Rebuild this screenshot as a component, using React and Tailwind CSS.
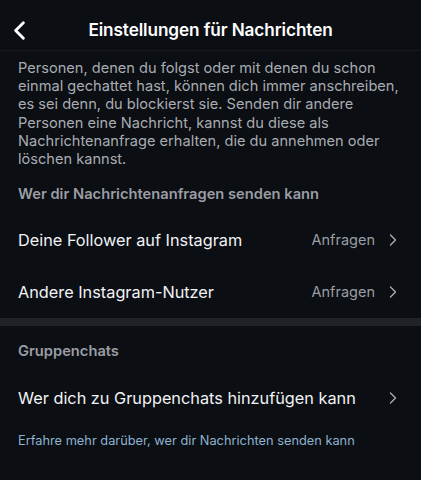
import { ChevronLeft, ChevronRight } from "lucide-react";

const requestRows = [
  ["Deine Follower auf Instagram", "Anfragen"],
  ["Andere Instagram-Nutzer", "Anfragen"],
];

export default function App() {
  return (
    <div
      className="h-[480px] w-[421px] overflow-hidden bg-[#0b0e13] text-white"
      style={{ fontFamily: "Inter, 'Noto Sans', sans-serif" }}
    >
      <header className="relative flex h-[51px] items-center justify-center border-b border-[#161a20] pt-[9px]">
        <ChevronLeft
          className="absolute left-[4px] top-[15px] h-[31px] w-[31px] text-white"
          strokeWidth={2.2}
        />
        <h1 className="text-[17.2px] font-semibold tracking-[-0.1px]">
          Einstellungen für Nachrichten
        </h1>
      </header>

      <p className="px-[18px] pt-[8px] text-[14.6px] leading-[18.2px] text-[#a9acb2]">
        Personen, denen du folgst oder mit denen du schon einmal gechattet
        hast, können dich immer anschreiben, es sei denn, du blockierst sie.
        Senden dir andere Personen eine Nachricht, kannst du diese als
        Nachrichtenanfrage erhalten, die du annehmen oder löschen kannst.
      </p>

      <h2 className="px-[18px] pt-[15px] text-[14.7px] font-semibold text-[#9a9da3]">
        Wer dir Nachrichtenanfragen senden kann
      </h2>

      <div className="pt-[9px]">
        {requestRows.map(([label, value]) => (
          <div
            key={label}
            className="flex h-[52px] items-center justify-between px-[18px]"
          >
            <span className="text-[16.3px] text-[#f2f3f5]">{label}</span>
            <span className="flex items-center gap-[8px]">
              <span className="text-[14.5px] text-[#9a9da3]">{value}</span>
              <ChevronRight className="h-[20px] w-[20px] text-[#a9acb2]" strokeWidth={1.6} />
            </span>
          </div>
        ))}
      </div>

      <div className="h-[8px] bg-[#1f2226]" />

      <h2 className="px-[18px] pt-[14px] text-[14.7px] font-semibold text-[#9a9da3]">
        Gruppenchats
      </h2>

      <div className="flex h-[54px] items-center justify-between px-[18px] pt-[18px]">
        <span className="text-[16.3px] text-[#f2f3f5]">
          Wer dich zu Gruppenchats hinzufügen kann
        </span>
        <ChevronRight className="h-[20px] w-[20px] text-[#a9acb2]" strokeWidth={1.6} />
      </div>

      <p className="px-[18px] pt-[15px] text-[12.8px] text-[#8fb3cf]">
        Erfahre mehr darüber, wer dir Nachrichten senden kann
      </p>
    </div>
  );
}
